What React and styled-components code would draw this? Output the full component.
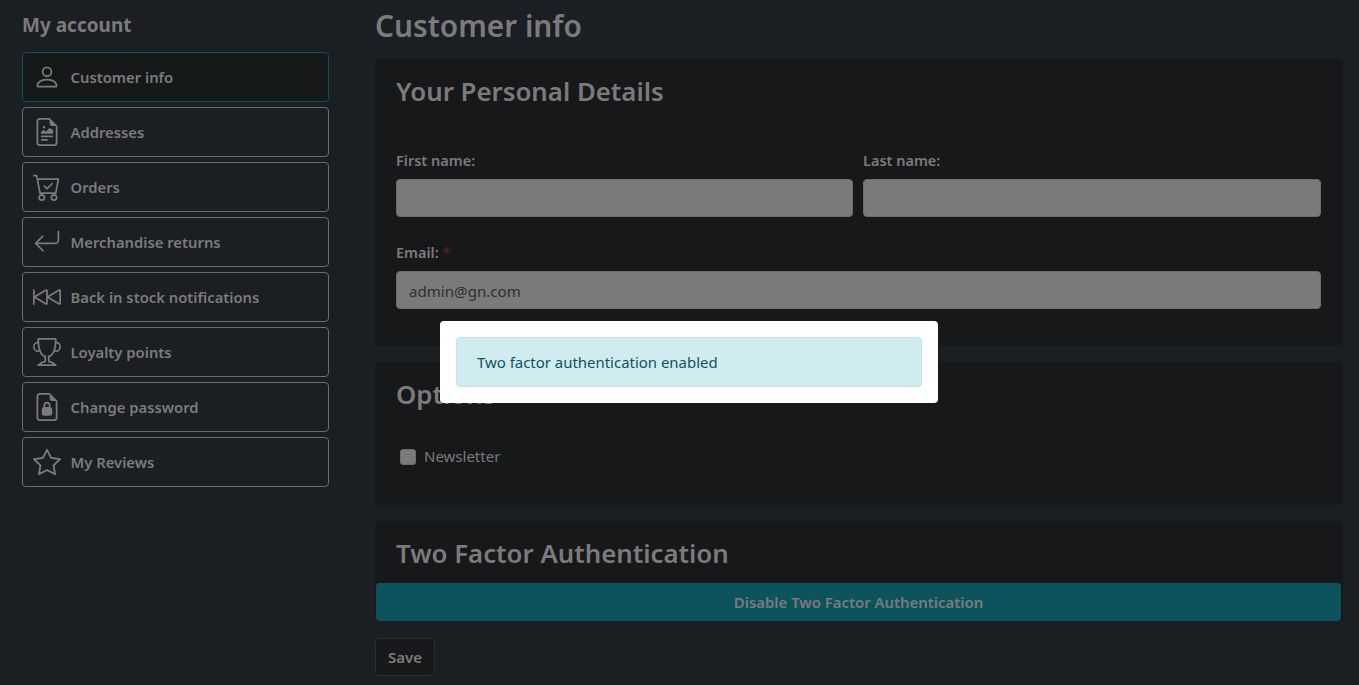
import React from "react";
import styled, { createGlobalStyle } from "styled-components";
import { BsPerson, BsFileEarmarkRichtext, BsCartCheck, BsArrowReturnLeft, BsSkipBackward, BsTrophy, BsFileEarmarkLock2, BsStar } from "react-icons/bs";

const Global = createGlobalStyle`
  html, body { margin: 0; padding: 0; height: 100%; background: #1b1e22; overflow: hidden; }
  * { box-sizing: border-box; }
  body { font-family: "Noto Sans", "Open Sans", sans-serif; color: #7b7b7b; font-size: 16px; }
`;
const Page = styled.div`
  display: flex; height: 685px; padding-left: 22px; position: relative;
`;
const Side = styled.aside`
  width: 307px; flex: none; margin-right: 46px; padding-top: 12px;
`;
const SideTitle = styled.h2`
  margin: 0 0 14px; font-size: 19px; line-height: 26px; font-weight: 700; color: #7b7b7b;
`;
const Nav = styled.nav`display: flex; flex-direction: column; gap: 5px;`;
const NavItem = styled.a`
  height: 50px; display: flex; align-items: center; gap: 9.5px; padding-left: 10px;
  border: 1px solid ${p => p.$active ? "#0d535c" : "#6d6d6d"}; border-radius: 4px;
  background: ${p => p.$active ? "#17181a" : "transparent"};
  font-size: 14.8px; font-weight: 600; color: #7b7b7b;
  svg { width: 28px; height: 28px; flex: none; }
`;
const Main = styled.main`width: 968px; flex: none; padding-top: 4px;`;
const PageTitle = styled.h1`
  margin: 0 0 11px; font-size: 29.8px; line-height: 44px; font-weight: 600; color: #7b7b7b;
`;
const Card = styled.section`
  background: #17181a; border-radius: 4px; margin-bottom: ${p => p.$gap || "16px"};
`;
const CardHead = styled.div`
  padding: 12px 21px 0; height: 62px;
  border-bottom: ${p => p.$flat ? "none" : "1px solid #141517"};
`;
const CardTitle = styled.h3`
  margin: 0; font-size: 25.8px; line-height: 40px; font-weight: 600; color: #7b7b7b;
`;
const CardBody = styled.div`padding: ${p => p.$pad || "28px 22px 37px 21px"};`;
const Row = styled.div`display: flex; gap: 10px;`;
const Field = styled.div`flex: ${p => p.$basis ? `0 0 ${p.$basis}` : 1}; margin-top: ${p => p.$top || 0};`;
const Label = styled.label`
  display: block; font-size: 14.5px; line-height: 22px; font-weight: 600; margin-bottom: 8px; color: #7b7b7b;
`;
const Req = styled.span`color: #5a1f24;`;
const Input = styled.div`
  height: 38px; background: #7a7a7a; border: 1px solid #6d6d6d; border-radius: 4px;
  padding: 0 12px; line-height: 38px; font-size: 15.1px; color: #2e2f31;
`;
const Check = styled.label`display: flex; align-items: center; gap: 8px; font-size: 15px; line-height: 24px; padding-left: 4px;`;
const Box = styled.span`width: 16px; height: 16px; margin-top: 2px; border-radius: 3px; background: #7a7a7a; border: 1px solid #6d6d6d;`;
const Wide = styled.button`
  display: block; width: 965px; height: 38px; margin: 0 1px; background: #0d535c; border: 0; border-radius: 4px;
  font: 600 14.9px "Noto Sans", sans-serif; color: #7b7b7b;
`;
const Save = styled.button`
  display: block; width: 60px; height: 38px; background: #17181a; border: 1px solid #2c2d30; border-radius: 4px;
  font: 600 15px "Noto Sans", sans-serif; color: #7b7b7b; padding: 0;
`;
const Modal = styled.div`
  position: absolute; left: 440px; top: 321px; width: 498px; height: 82px; padding: 16px;
  background: #fff; border-radius: 4px;
`;
const Alert = styled.div`
  height: 50px; background: #d1ecf1; border: 1px solid #bee5eb; border-radius: 4px; color: #0c5460;
  padding: 0 20px; line-height: 48px; font-size: 14.95px;
`;

const items = [
  [BsPerson, "Customer info", true],
  [BsFileEarmarkRichtext, "Addresses"],
  [BsCartCheck, "Orders"],
  [BsArrowReturnLeft, "Merchandise returns"],
  [BsSkipBackward, "Back in stock notifications"],
  [BsTrophy, "Loyalty points"],
  [BsFileEarmarkLock2, "Change password"],
  [BsStar, "My Reviews"],
];

export default function App() {
  return (
    <Page>
      <Global />
      <Side>
        <SideTitle>My account</SideTitle>
        <Nav>
          {items.map(([Icon, text, active]) => (
            <NavItem key={text} $active={active}><Icon />{text}</NavItem>
          ))}
        </Nav>
      </Side>
      <Main>
        <PageTitle>Customer info</PageTitle>
        <Card>
          <CardHead><CardTitle>Your Personal Details</CardTitle></CardHead>
          <CardBody>
            <Row>
              <Field $basis="457px"><Label>First name:</Label><Input /></Field>
              <Field><Label>Last name:</Label><Input /></Field>
            </Row>
            <Field $top="24px"><Label>Email: <Req>*</Req></Label><Input>admin@gn.com</Input></Field>
          </CardBody>
        </Card>
        <Card>
          <CardHead><CardTitle>Options</CardTitle></CardHead>
          <CardBody $pad="20px 21px 37px">
            <Check><Box />Newsletter</Check>
          </CardBody>
        </Card>
        <Card $gap="17px">
          <CardHead $flat><CardTitle>Two Factor Authentication</CardTitle></CardHead>
          <Wide>Disable Two Factor Authentication</Wide>
        </Card>
        <Save>Save</Save>
      </Main>
      <Modal><Alert>Two factor authentication enabled</Alert></Modal>
    </Page>
  );
}
